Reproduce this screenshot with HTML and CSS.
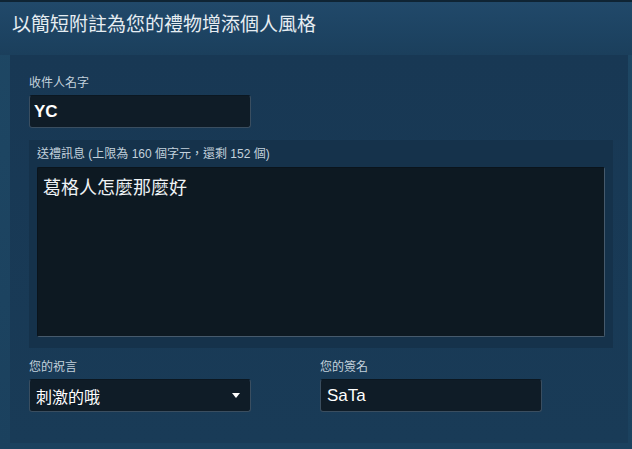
FILE: index.html
```html
<!DOCTYPE html>
<html lang="zh-Hant">
<head>
  <meta charset="UTF-8">
  <meta name="viewport" content="width=device-width, initial-scale=1.0">
  <title>禮物附註</title>
  <link rel="stylesheet" href="styles.css">
</head>
<body>
  <div class="page">
    <!-- Header -->
    <div class="header">
      <h2>以簡短附註為您的禮物增添個人風格</h2>
    </div>

    <div class="panel">
      <!-- Recipient name -->
      <label class="field-label" for="recipient">收件人名字</label>
      <input type="text" id="recipient" class="text-input" value="YC">

      <!-- Message -->
      <div class="message-box">
        <label class="field-label" for="message">送禮訊息 (上限為 160 個字元，還剩 152 個)</label>
        <textarea id="message" class="message-input">葛格人怎麼那麼好</textarea>
      </div>

      <!-- Sentiment and signature -->
      <div class="bottom-row">
        <div class="col">
          <div class="field-label">您的祝言</div>
          <div class="select-box">
            <span>刺激的哦</span>
            <span class="arrow"></span>
          </div>
        </div>
        <div class="col">
          <label class="field-label" for="signature">您的簽名</label>
          <input type="text" id="signature" class="text-input sign" value="SaTa">
        </div>
      </div>
    </div>
  </div>
</body>
</html>
```

FILE: styles.css
```css
html, body {
  margin: 0;
  padding: 0;
}
body {
  font-family: "Liberation Sans", Arial, "Noto Sans CJK TC", sans-serif;
  background-color: #1c4460;
  width: 632px;
  height: 449px;
  overflow: hidden;
}
.page {
  height: 449px;
  border-top: 2px solid #0f2434;
  box-sizing: border-box;
  background: linear-gradient(to bottom, #1e4764, #1b415e);
}
.header {
  height: 53px;
  padding-left: 12px;
  background: linear-gradient(to bottom, #21496a 0%, #1d4362 60%, #1b3f5c 100%);
}
.header h2 {
  margin: 0;
  padding-top: 10px;
  font-family: "Noto Sans CJK TC", sans-serif;
  font-size: 19px;
  font-weight: normal;
  line-height: 22px;
  color: #e6edf2;
}
.panel {
  margin-left: 10px;
  margin-right: 4px;
  height: 388px;
  box-sizing: border-box;
  padding: 20px 0 0 19px;
  background: linear-gradient(to bottom, #183854, #193b57);
}
.field-label {
  display: block;
  font-family: "Liberation Sans", Arial, "Noto Sans CJK TC", sans-serif;
  font-size: 12px;
  line-height: 16px;
  color: #c3d1dc;
  margin-bottom: 4px;
}
.text-input {
  display: block;
  width: 222px;
  height: 33px;
  box-sizing: border-box;
  margin: 0;
  padding: 0 4px;
  border: 1px solid #3a4e60;
  border-top-color: #0b1721;
  border-radius: 3px;
  background-color: #0f1c27;
  color: #fff;
  font-family: "Liberation Sans", Arial, sans-serif;
  font-size: 17px;
  font-weight: bold;
  outline: none;
}
.text-input.sign {
  padding-left: 6px;
  font-weight: normal;
}
.message-box {
  width: 584px;
  box-sizing: border-box;
  margin-top: 12px;
  padding: 6px 8px 11px;
  background-color: #15324b;
}
.message-box .field-label {
  margin-bottom: 5px;
}
.message-input {
  display: block;
  width: 568px;
  height: 170px;
  box-sizing: border-box;
  margin: 0;
  padding: 7px 5px;
  border: 1px solid #465a6c;
  border-top-color: #0a141c;
  border-left-color: #0a141c;
  border-radius: 2px;
  background-color: #0d1922;
  color: #eef2f5;
  font-family: "Noto Sans CJK TC", sans-serif;
  font-size: 18px;
  line-height: 22px;
  resize: none;
  outline: none;
}
.bottom-row {
  display: flex;
  margin-top: 11px;
}
.col {
  width: 291px;
}
.select-box {
  display: flex;
  align-items: center;
  justify-content: space-between;
  width: 222px;
  height: 33px;
  box-sizing: border-box;
  padding: 0 10px 0 6px;
  border: 1px solid #3a4e60;
  border-top-color: #0b1721;
  border-radius: 3px;
  background-color: #0f1c27;
  color: #fff;
  font-family: "Noto Sans CJK TC", sans-serif;
  font-size: 16px;
}
.arrow {
  width: 0;
  height: 0;
  border-left: 4px solid transparent;
  border-right: 4px solid transparent;
  border-top: 5px solid #ffffff;
}
```
